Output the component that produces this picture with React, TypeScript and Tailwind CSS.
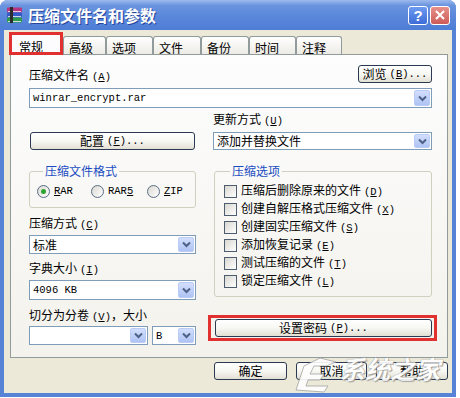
import React from 'react';

const LAT = "font-['Liberation_Mono',monospace] text-[10.5px]";

function Hk({ k, tail }: { k: string; tail?: string }) {
  return (
    <span className={`${LAT} ml-[3px]`}>
      (<span className="underline">{k}</span>){tail}
    </span>
  );
}

function Chevron() {
  return (
    <svg width="9" height="7" viewBox="0 0 9 7">
      <path d="M1 1.5 L4.5 5 L8 1.5" fill="none" stroke="#4D6185" strokeWidth="2" />
    </svg>
  );
}

function Combo({ children, className }: { children?: React.ReactNode; className: string }) {
  return (
    <div className={`flex items-stretch bg-white border border-[#7F9DB9] ${className}`}>
      <div className="flex-1 flex items-center pl-[3px] overflow-hidden whitespace-nowrap">{children}</div>
      <div className="w-[16px] m-[1px] rounded-[2px] border border-[#BACCF6] bg-gradient-to-b from-[#D2DEFD] to-[#AFC3F3] flex items-center justify-center">
        <Chevron />
      </div>
    </div>
  );
}

function Btn({ children, className }: { children: React.ReactNode; className: string }) {
  return (
    <div
      className={`flex items-center justify-center rounded-[3px] border border-[#2B3A52] bg-gradient-to-b from-white via-[#F7F7F3] to-[#E2E0D4] ${className}`}
    >
      {children}
    </div>
  );
}

function Check({ label, k }: { label: string; k: string }) {
  return (
    <div className="flex items-center h-[18px]">
      <div className="w-[13px] h-[13px] border border-[#4E5C70] bg-gradient-to-br from-[#D8D7D0] to-white" />
      <span className="ml-[4px]">
        {label}
        <Hk k={k} />
      </span>
    </div>
  );
}

function Radio({ on, pre, k, post, className }: { on?: boolean; pre: string; k: string; post: string; className: string }) {
  return (
    <div className={`flex items-center ${className}`}>
      <div className="w-[13px] h-[13px] rounded-full border border-[#5A6C86] bg-gradient-to-br from-[#DAD9D2] to-white flex items-center justify-center">
        {on && <div className="w-[5px] h-[5px] rounded-full bg-[#2FA32F]" />}
      </div>
      <span className={`${LAT} ml-[4px]`}>
        {pre}
        <span className="underline">{k}</span>
        {post}
      </span>
    </div>
  );
}

const tabs = [
  { t: '高级', w: 'w-[43px]' },
  { t: '选项', w: 'w-[47px]' },
  { t: '文件', w: 'w-[48px]' },
  { t: '备份', w: 'w-[48px]' },
  { t: '时间', w: 'w-[47px]' },
  { t: '注释', w: 'w-[46px]' },
];

export default function App() {
  return (
    <div className="relative w-[460px] h-[398px] bg-white overflow-hidden font-['Noto_Sans_CJK_SC',sans-serif] text-[12px] leading-[14px] text-black">
      <div className="w-[456px] h-[397px] rounded-t-[8px] bg-[#5783D7] flex flex-col overflow-hidden">
        {/* Title bar */}
        <div className="h-[30px] shrink-0 flex items-center px-[6px] bg-[linear-gradient(to_bottom,#9DBAEE_0%,#6A94DF_18%,#5A87DA_55%,#4E7DD6_100%)]">
          <svg width="17" height="16" viewBox="0 0 17 16">
            <rect x="1" y="0.5" width="15" height="5" rx="1" fill="#B8347E" />
            <rect x="1" y="5.5" width="15" height="5" rx="1" fill="#3659C8" />
            <rect x="1" y="10.5" width="15" height="5" rx="1" fill="#2E9A4C" />
            <path d="M2 4.5h13M2 9.5h13M2 14.5h13" stroke="#F2F2F2" strokeWidth="0.8" />
            <rect x="4" y="0" width="3" height="16" fill="#2D2D2D" />
          </svg>
          <span className="ml-[5px] text-white font-bold text-[16px] leading-[18px] [text-shadow:1px_1px_0_#27469A]">
            压缩文件名和参数
          </span>
          <div className="ml-auto flex gap-[2px]">
            <div className="w-[20px] h-[19px] rounded-[3px] border border-white bg-gradient-to-b from-[#6D9AF0] to-[#3D6CD8] flex items-center justify-center text-white font-bold text-[15px] leading-none font-['Liberation_Sans',sans-serif]">
              ?
            </div>
            <div className="w-[20px] h-[19px] rounded-[3px] border border-white bg-gradient-to-b from-[#E8908A] to-[#CC5B58] flex items-center justify-center">
              <svg width="10" height="10" viewBox="0 0 10 10">
                <path d="M1 1 L9 9 M9 1 L1 9" stroke="white" strokeWidth="2" />
              </svg>
            </div>
          </div>
        </div>

        {/* Body */}
        <div className="mx-[4px] mb-[4px] flex-1 bg-[#ECE9D8] flex flex-col">
          {/* Tabs */}
          <div className="mt-[2px] ml-[6px] h-[22px] flex items-end">
            <div className="relative z-10 -mb-[1px] w-[53px] h-[23px] bg-[#FCFCFE] border border-b-0 border-[#919B9C] rounded-t-[3px] pl-[8px] pt-[7px]">
              <div className="absolute -left-[1px] -top-[1px] right-0 h-[3px] rounded-t-[3px] bg-[#F2B33D]" />
              常规
              <div className="absolute -left-[2px] -top-[1px] w-[54px] h-[23px] border-[3px] border-[#E0302F]" />
            </div>
            {tabs.map((x) => (
              <div
                key={x.t}
                className={`${x.w} h-[18px] bg-gradient-to-b from-white to-[#ECEBE5] border border-b-0 border-[#919B9C] rounded-t-[3px] pl-[5px] pt-[4px]`}
              >
                {x.t}
              </div>
            ))}
          </div>

          {/* Panel */}
          <div className="ml-[6px] mr-[4px] h-[304px] border border-[#919B9C] bg-gradient-to-b from-[#FDFDFE] to-[#F3F2EC] pl-[18px] pr-[15px] pt-[10px]">
            <div className="flex items-center justify-between h-[18px]">
              <div className="mt-[4px]">
                压缩文件名
                <Hk k="A" />
              </div>
              <Btn className="w-[74px] h-[18px]">
                浏览
                <Hk k="B" tail="..." />
              </Btn>
            </div>

            <Combo className="mt-[5px] h-[20px]">
              <span className={LAT}>winrar_encrypt.rar</span>
            </Combo>

            <div className="grid grid-cols-[167px_219px] gap-x-[17px]">
              <div className="flex flex-col justify-end">
                <Btn className="h-[18px] mx-[1px]">
                  配置
                  <Hk k="F" tail="..." />
                </Btn>
              </div>
              <div>
                <div className="mt-[4px]">
                  更新方式
                  <Hk k="U" />
                </div>
                <Combo className="mt-[4px] h-[18px]">添加并替换文件</Combo>
              </div>
            </div>

            <div className="grid grid-cols-[167px_219px] gap-x-[17px] mt-[14px]">
              {/* Left column */}
              <div>
                <fieldset className="h-[44px] border border-[#D0D0BF] rounded-[3px] pl-[7px] pt-[6px]">
                  <legend className="ml-[6px] px-[2px] text-[#1A4CC2]">压缩文件格式</legend>
                  <div className="flex">
                    <Radio on pre="" k="R" post="AR" className="w-[54px]" />
                    <Radio pre="RAR" k="5" post="" className="w-[56px]" />
                    <Radio pre="" k="Z" post="IP" className="w-[40px]" />
                  </div>
                </fieldset>
                <div className="mt-[8px]">
                  压缩方式
                  <Hk k="C" />
                </div>
                <Combo className="mt-[3px] h-[19px]">标准</Combo>
                <div className="mt-[7px]">
                  字典大小
                  <Hk k="I" />
                </div>
                <Combo className="mt-[3px] h-[20px]">
                  <span className={LAT}>4096 KB</span>
                </Combo>
                <div className="mt-[8px]">
                  切分为分卷
                  <Hk k="V" />，大小
                </div>
                <div className="mt-[2px] flex gap-[4px]">
                  <Combo className="w-[119px] h-[19px]" />
                  <Combo className="w-[44px] h-[19px]">
                    <span className={LAT}>B</span>
                  </Combo>
                </div>
              </div>

              {/* Right column */}
              <div>
                <fieldset className="ml-[1px] h-[133px] border border-[#D0D0BF] rounded-[3px] pl-[9px] pt-[4px]">
                  <legend className="ml-[6px] px-[2px] text-[#1A4CC2]">压缩选项</legend>
                  <Check label="压缩后删除原来的文件" k="D" />
                  <Check label="创建自解压格式压缩文件" k="X" />
                  <Check label="创建固实压缩文件" k="S" />
                  <Check label="添加恢复记录" k="E" />
                  <Check label="测试压缩的文件" k="T" />
                  <Check label="锁定压缩文件" k="L" />
                </fieldset>
                <div className="mt-[18px] -ml-[5px] -mr-[5px] border-[3px] border-[#E0302F] pt-[1px] pb-[1px] pl-[4px] pr-[2px]">
                  <Btn className="h-[18px]">
                    设置密码
                    <Hk k="P" tail="..." />
                  </Btn>
                </div>
              </div>
            </div>
          </div>

          {/* Bottom buttons */}
          <div className="mt-[4px] mr-[4px] flex justify-end gap-[9px]">
            <Btn className="w-[73px] h-[18px]">确定</Btn>
            <Btn className="w-[71px] h-[18px]">取消</Btn>
            <Btn className="w-[72px] h-[18px]">帮助</Btn>
          </div>
        </div>
      </div>

      {/* Watermark */}
      <div className="absolute left-[290px] top-[352px] flex items-start pointer-events-none opacity-90">
        <svg width="52" height="42" viewBox="0 0 52 42">
          <path
            d="M6 38 L14 14 L30 6 L46 10 L36 14 L24 14 L20 22 L34 22 L30 28 L18 28 L16 34 L38 34 L34 40 Z"
            fill="white"
            stroke="#9A9A9A"
            strokeWidth="0.8"
          />
        </svg>
        <span className="ml-[-2px] mt-[2px] italic font-bold text-[25px] leading-[28px] text-white [text-shadow:0_0_1px_#777,1px_1px_1px_#999]">
          系统之家
        </span>
      </div>
    </div>
  );
}
